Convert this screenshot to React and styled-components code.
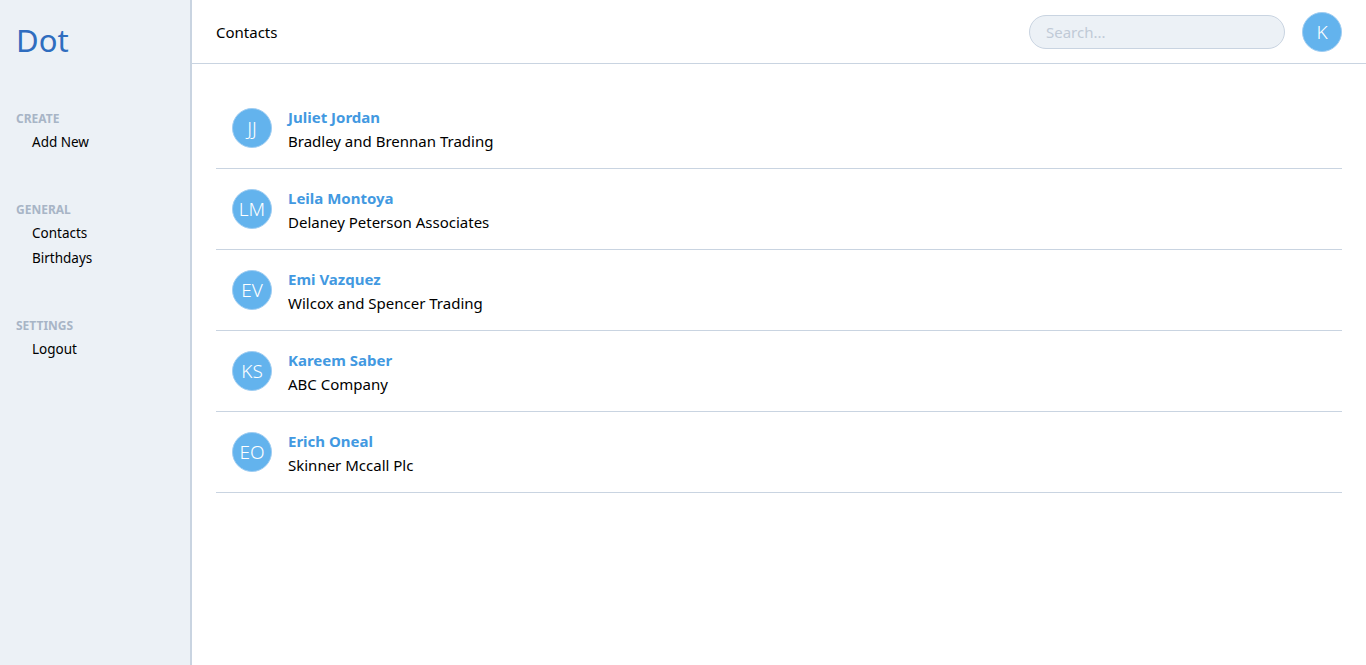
import React from "react";
import styled, { createGlobalStyle } from "styled-components";

const GlobalStyle = createGlobalStyle`
  html, body {
    margin: 0;
    padding: 0;
    height: 100%;
  }
  body {
    font-family: "Segoe UI", "Noto Sans", "Open Sans", sans-serif;
    color: #000;
    background: #fff;
  }
  #root {
    height: 100%;
  }
`;

const contacts = [
  { initials: "JJ", name: "Juliet Jordan", company: "Bradley and Brennan Trading" },
  { initials: "LM", name: "Leila Montoya", company: "Delaney Peterson Associates" },
  { initials: "EV", name: "Emi Vazquez", company: "Wilcox and Spencer Trading" },
  { initials: "KS", name: "Kareem Saber", company: "ABC Company" },
  { initials: "EO", name: "Erich Oneal", company: "Skinner Mccall Plc" },
];

const menu = [
  { title: "Create", items: ["Add New"] },
  { title: "General", items: ["Contacts", "Birthdays"] },
  { title: "Settings", items: ["Logout"] },
];

const Layout = styled.div`
  display: flex;
  height: 665px;
`;

const Sidebar = styled.aside`
  width: 192px;
  flex-shrink: 0;
  box-sizing: border-box;
  background: #ecf1f6;
  border-right: 2px solid #c9d4e1;
  padding: 20px 16px;
`;

const Logo = styled.div`
  font-size: 31px;
  color: #2f6dbf;
  line-height: 40px;
  margin-bottom: 51px;
`;

const Section = styled.div`
  margin-bottom: 47px;
`;

const SectionTitle = styled.div`
  font-size: 12px;
  font-weight: 700;
  color: #a8b5c6;
  text-transform: uppercase;
  line-height: 16px;
  margin-bottom: 3px;
`;

const MenuItem = styled.div`
  font-size: 13.5px;
  line-height: 25px;
  padding-left: 16px;
  cursor: pointer;
`;

const Main = styled.main`
  flex: 1;
  display: flex;
  flex-direction: column;
`;

const Header = styled.header`
  height: 63px;
  border-bottom: 1px solid #c9d4e1;
  display: flex;
  align-items: center;
  padding: 0 24px;
  gap: 17px;
`;

const PageTitle = styled.div`
  flex: 1;
  font-size: 15px;
`;

const Search = styled.input`
  width: 256px;
  height: 34px;
  box-sizing: border-box;
  border-radius: 17px;
  border: 1px solid #c9d4e1;
  background: #ecf1f6;
  padding: 0 16px;
  font-family: inherit;
  font-size: 15px;
  outline: none;
  &::placeholder {
    color: #c0cad6;
  }
`;

const Avatar = styled.div`
  width: 40px;
  height: 40px;
  flex-shrink: 0;
  box-sizing: border-box;
  border-radius: 50%;
  background: #63b3ed;
  border: 1px solid #9fcdf2;
  color: #fff;
  font-size: 19px;
  font-weight: 300;
  display: flex;
  align-items: center;
  justify-content: center;
`;

const List = styled.div`
  padding: 24px 24px 0;
`;

const Row = styled.div`
  display: flex;
  align-items: center;
  gap: 16px;
  height: 80px;
  padding-left: 16px;
  border-bottom: 1px solid #c9d4e1;
`;

const Info = styled.div`
  display: flex;
  flex-direction: column;
  padding-top: 1px;
`;

const Name = styled.div`
  font-size: 15px;
  font-weight: 700;
  color: #4299e1;
  line-height: 24px;
`;

const Company = styled.div`
  font-size: 15px;
  line-height: 24px;
`;

export default function App() {
  return (
    <>
      <GlobalStyle />
      <Layout>
        <Sidebar>
          <Logo>Dot</Logo>
          {menu.map((s) => (
            <Section key={s.title}>
              <SectionTitle>{s.title}</SectionTitle>
              {s.items.map((i) => (
                <MenuItem key={i}>{i}</MenuItem>
              ))}
            </Section>
          ))}
        </Sidebar>
        <Main>
          <Header>
            <PageTitle>Contacts</PageTitle>
            <Search placeholder="Search..." />
            <Avatar>K</Avatar>
          </Header>
          <List>
            {contacts.map((c) => (
              <Row key={c.name}>
                <Avatar>{c.initials}</Avatar>
                <Info>
                  <Name>{c.name}</Name>
                  <Company>{c.company}</Company>
                </Info>
              </Row>
            ))}
          </List>
        </Main>
      </Layout>
    </>
  );
}
